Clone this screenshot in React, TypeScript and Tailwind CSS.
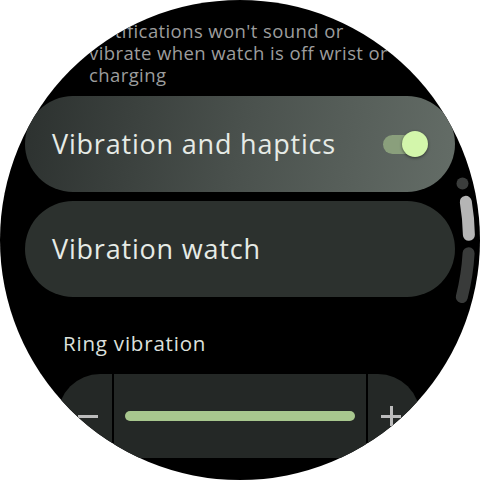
import React from "react";

export default function App() {
  const font = { fontFamily: "'Open Sans', Roboto, sans-serif" };
  return (
    <div className="relative w-[480px] h-[480px] bg-white" style={font}>
      <div className="w-[480px] h-[480px] rounded-full bg-black overflow-hidden">
        <div className="flex flex-col pt-[20px]">
          <p className="pl-[89px] text-[18.5px] leading-[22px] text-[#9c9d9d] whitespace-nowrap tracking-[0.4px]">
            Notifications won't sound or
            <br />
            vibrate when watch is off wrist or
            <br />
            charging
          </p>
          <div className="mt-[10px] mx-[25px] h-[96px] rounded-full bg-[linear-gradient(100deg,#2c312f_0%,#4a514d_50%,#646d67_100%)] flex items-center justify-between pl-[27px] pr-[27px]">
            <span className="text-[27px] text-[#e6ebe6] tracking-[0.8px]">Vibration and haptics</span>
            <div className="relative w-[45px] h-[26px]">
              <div className="absolute left-0 top-[4px] w-[37px] h-[19px] rounded-full bg-[#8a9f7c]" />
              <div className="absolute right-0 top-0 w-[26px] h-[26px] rounded-full bg-[#d3f6ab] shadow-[0_1px_3px_rgba(0,0,0,0.5)]" />
            </div>
          </div>
          <div className="mt-[9px] mx-[25px] h-[96px] rounded-full bg-[#2c312e] flex items-center pl-[27px]">
            <span className="text-[27px] text-[#e6ebe6] tracking-[0.8px]">Vibration watch</span>
          </div>
          <p className="mt-[34px] pl-[63px] text-[20.5px] leading-[24px] text-[#dde0dd] tracking-[0.8px]">Ring vibration</p>
          <div className="mt-[19px] ml-[58px] mr-[60px] h-[84px] flex gap-[2px]">
            <div className="w-[54px] h-full bg-[#242826] rounded-tl-[42px] flex items-center pl-[20px]">
              <div className="w-[20px] h-[3px] bg-[#bcbcbc]" />
            </div>
            <div className="flex-1 h-full bg-[#242826] flex items-center px-[11px]">
              <div className="w-full h-[10px] rounded-full bg-[#a8c78e]" />
            </div>
            <div className="w-[52px] h-full bg-[#242826] rounded-tr-[42px] flex items-center pl-[13px]">
              <div className="relative w-[20px] h-[20px]">
                <div className="absolute left-0 top-[8.5px] w-[20px] h-[3px] bg-[#bcbcbc]" />
                <div className="absolute top-0 left-[8.5px] w-[3px] h-[20px] bg-[#bcbcbc]" />
              </div>
            </div>
          </div>
        </div>
      </div>
      <svg className="absolute inset-0 pointer-events-none" width="480" height="480" viewBox="0 0 480 480">
        <circle cx="462.5" cy="183.5" r="6" fill="#3b3d3c" />
        <path d="M465.8 201.8 A229 229 0 0 1 468.9 234.8" stroke="#b5b5b5" strokeWidth="12" strokeLinecap="round" fill="none" />
        <path d="M468.6 253.2 A229 229 0 0 1 461.8 297" stroke="#393b3a" strokeWidth="12" strokeLinecap="round" fill="none" />
      </svg>
    </div>
  );
}
